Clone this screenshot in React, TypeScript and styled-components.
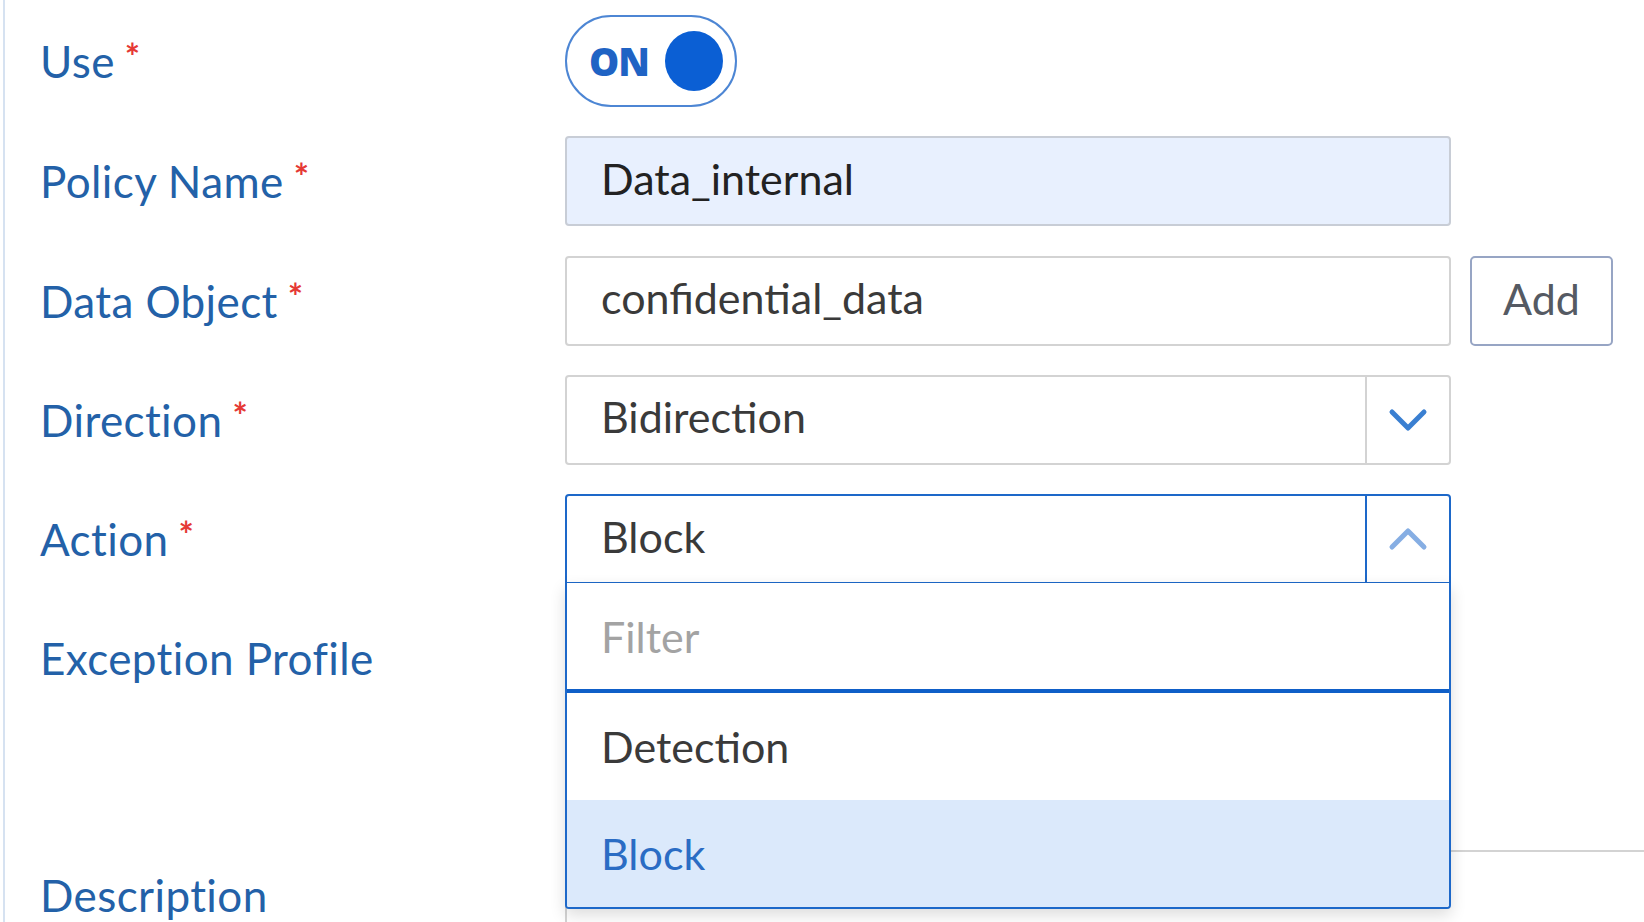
import React from 'react';
import styled, { createGlobalStyle } from 'styled-components';

const GlobalStyle = createGlobalStyle`
  html, body {
    margin: 0;
    padding: 0;
    background: #ffffff;
  }
  body {
    font-family: Lato, "Open Sans", sans-serif;
  }
`;

const labelBlue = '#2361a8';
const activeBlue = '#1d68c9';
const fieldBorder = '#d3d3d3';

const Page = styled.div`
  height: 100vh;
  overflow: hidden;
  padding-left: 3px;
  box-sizing: border-box;
`;

const Panel = styled.div`
  height: 100%;
  border-left: 2px solid #d6e2f1;
  padding: 16px 0 0 35px;
  box-sizing: border-box;
`;

const Form = styled.div`
  display: grid;
  grid-template-columns: 506px 886px auto;
  grid-auto-rows: minmax(90px, auto);
  column-gap: 19px;
  row-gap: 29.25px;
  align-items: start;
`;

const Label = styled.div`
  grid-column: 1;
  height: 90px;
  display: flex;
  align-items: center;
  font-size: 44px;
  letter-spacing: 0.4px;
  color: ${labelBlue};
  white-space: nowrap;
`;

const Required = styled.span`
  align-self: flex-start;
  margin: 22px 0 0 10px;
  font-size: 36px;
  font-weight: 700;
  line-height: 1;
  color: #e53935;
`;

const Field = styled.div<{ $wide?: boolean }>`
  grid-column: ${({ $wide }) => ($wide ? '2 / span 2' : '2')};
  position: relative;
`;

const Toggle = styled.div`
  width: 172px;
  height: 92px;
  margin-top: -1px;
  box-sizing: border-box;
  border: 2px solid #4d86d4;
  border-radius: 46px;
  display: flex;
  align-items: center;
  padding: 0 12px 0 22px;
  gap: 16px;
`;

const ToggleText = styled.span`
  font-family: "Open Sans", Lato, sans-serif;
  font-weight: 800;
  font-size: 38px;
  color: #1f63c4;
  letter-spacing: -1px;
`;

const Knob = styled.span`
  width: 60px;
  height: 60px;
  border-radius: 50%;
  background: #0b5fd4;
`;

const TextBox = styled.div<{ $filled?: boolean }>`
  height: 90px;
  box-sizing: border-box;
  border: 2px solid ${({ $filled }) => ($filled ? '#c8cdd6' : fieldBorder)};
  border-radius: 4px;
  background: ${({ $filled }) => ($filled ? '#e8f0fe' : '#ffffff')};
  padding: 0 34px 6px;
  display: flex;
  align-items: center;
  font-size: 43px;
  color: ${({ $filled }) => ($filled ? '#222222' : '#3a3a3a')};
`;

const AddButton = styled.button`
  grid-column: 3;
  width: 143px;
  height: 90px;
  box-sizing: border-box;
  border: 2px solid #97a5c4;
  border-radius: 5px;
  background: #ffffff;
  font-family: Lato, sans-serif;
  font-size: 43px;
  color: #555a63;
  padding: 0 0 4px;
`;

const SelectBox = styled.div<{ $open?: boolean }>`
  height: 90px;
  box-sizing: border-box;
  border: 2px solid ${({ $open }) => ($open ? activeBlue : fieldBorder)};
  border-radius: ${({ $open }) => ($open ? '4px 4px 0 0' : '4px')};
  display: flex;
  background: #ffffff;
`;

const SelectValue = styled.div`
  flex: 1;
  display: flex;
  align-items: center;
  padding: 0 0 6px 34px;
  font-size: 43px;
  color: #3a3a3a;
`;

const ChevronBox = styled.div<{ $open?: boolean }>`
  width: 82px;
  border-left: 2px solid ${({ $open }) => ($open ? activeBlue : fieldBorder)};
  display: flex;
  align-items: center;
  justify-content: center;
`;

const Dropdown = styled.div`
  position: absolute;
  top: 89px;
  left: 0;
  right: 0;
  z-index: 10;
  background: #ffffff;
  border: 2px solid ${activeBlue};
  border-top: none;
  border-radius: 0 0 4px 4px;
  box-shadow: 0 6px 16px rgba(0, 0, 0, 0.14);
  overflow: hidden;
`;

const FilterRow = styled.div`
  height: 110px;
  box-sizing: border-box;
  border-bottom: 4px solid #0f5fc8;
  display: flex;
  align-items: center;
  padding-left: 34px;
  font-size: 43px;
  color: #a3a3a3;
`;

const Option = styled.div<{ $selected?: boolean }>`
  height: 107px;
  display: flex;
  align-items: center;
  padding-left: 34px;
  font-size: 43px;
  background: ${({ $selected }) => ($selected ? '#dbe9fb' : '#ffffff')};
  color: ${({ $selected }) => ($selected ? '#2a6cc4' : '#3a3a3a')};
`;

const ProfileBox = styled.div`
  height: 207px;
  box-sizing: border-box;
  border: 2px solid ${fieldBorder};
  border-radius: 4px;
`;

const TextArea = styled.div`
  width: 1200px;
  height: 200px;
  box-sizing: border-box;
  border: 2px solid ${fieldBorder};
  border-radius: 4px;
`;

const Chevron = ({ up, color }: { up?: boolean; color: string }) => (
  <svg width="40" height="24" viewBox="0 0 40 24">
    <polyline
      points={up ? '4,20 20,4 36,20' : '4,4 20,20 36,4'}
      fill="none"
      stroke={color}
      strokeWidth="5"
      strokeLinecap="round"
      strokeLinejoin="round"
    />
  </svg>
);

const FieldLabel = ({ text, required }: { text: string; required?: boolean }) => (
  <Label>
    {text}
    {required && <Required>*</Required>}
  </Label>
);

export default function App() {
  return (
    <>
      <GlobalStyle />
      <Page>
        <Panel>
          <Form>
            <FieldLabel text="Use" required />
            <Field>
              <Toggle>
                <ToggleText>ON</ToggleText>
                <Knob />
              </Toggle>
            </Field>

            <FieldLabel text="Policy Name" required />
            <Field>
              <TextBox $filled>Data_internal</TextBox>
            </Field>

            <FieldLabel text="Data Object" required />
            <Field>
              <TextBox>confidential_data</TextBox>
            </Field>
            <AddButton>Add</AddButton>

            <FieldLabel text="Direction" required />
            <Field>
              <SelectBox>
                <SelectValue>Bidirection</SelectValue>
                <ChevronBox>
                  <Chevron color="#3a7fd1" />
                </ChevronBox>
              </SelectBox>
            </Field>

            <FieldLabel text="Action" required />
            <Field>
              <SelectBox $open>
                <SelectValue>Block</SelectValue>
                <ChevronBox $open>
                  <Chevron up color="#86aee3" />
                </ChevronBox>
              </SelectBox>
              <Dropdown>
                <FilterRow>Filter</FilterRow>
                <Option>Detection</Option>
                <Option $selected>Block</Option>
              </Dropdown>
            </Field>

            <FieldLabel text="Exception Profile" />
            <Field>
              <ProfileBox />
            </Field>

            <FieldLabel text="Description" />
            <Field $wide>
              <TextArea />
            </Field>
          </Form>
        </Panel>
      </Page>
    </>
  );
}
